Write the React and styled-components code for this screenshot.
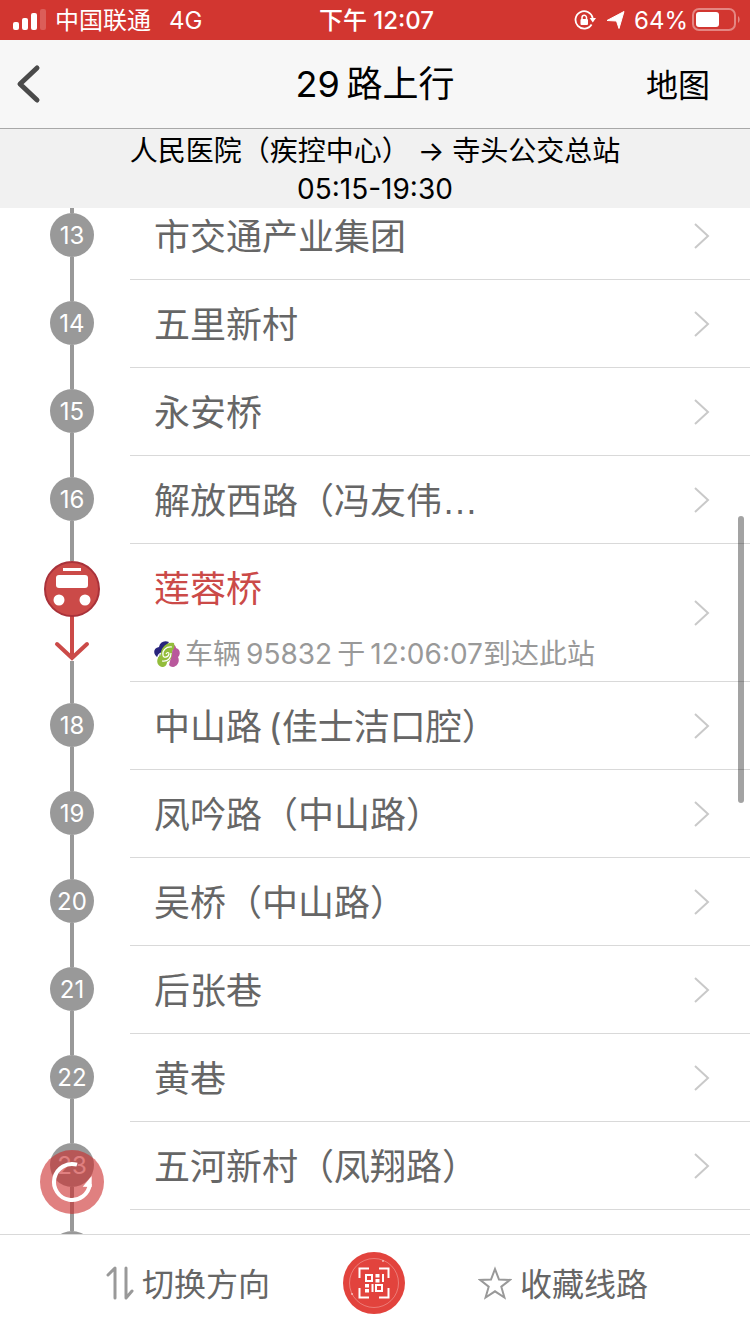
import React, { useLayoutEffect, useRef } from 'react';
import styled, { createGlobalStyle } from 'styled-components';

const stops = [
    { no: 13, name: '市交通产业集团' },
    { no: 14, name: '五里新村' },
    { no: 15, name: '永安桥' },
    { no: 16, name: '解放西路（冯友伟', truncated: true },
    { no: 17, name: '莲蓉桥', arrival: '车辆\u200995832\u2009于\u200912:06:07到达此站' },
    { no: 18, name: '中山路\u2009(佳士洁口腔）' },
    { no: 19, name: '凤吟路（中山路）' },
    { no: 20, name: '吴桥（中山路）' },
    { no: 21, name: '后张巷' },
    { no: 22, name: '黄巷' },
    { no: 23, name: '五河新村（凤翔路）' },
    { no: 24, name: '' },
];

function StatusBar() {
    return (
        <Status>
            <StatusSide>
                <svg width="34" height="24" viewBox="0 0 34 24" fill="#fff">
                    <rect x="0" y="14" width="6" height="8" rx="2" />
                    <rect x="9" y="10" width="6" height="12" rx="2" />
                    <rect x="18" y="5" width="6" height="17" rx="2" />
                    <rect x="27" y="1" width="6" height="21" rx="2" opacity="0.2" />
                </svg>
                <Carrier>中国联通</Carrier>
                <span>4G</span>
            </StatusSide>
            <Clock>下午 12:07</Clock>
            <StatusSide $end>
                <svg width="22" height="22" viewBox="0 0 22 22" fill="none" stroke="#fff" strokeWidth="1.8">
                    <path d="M17.600 15.500A8.700 8.700 0 1 1 18.700 9" />
                    <path d="M15.600 9h6.400l-3.200 4.500z" fill="#fff" stroke="none" />
                    <rect x="6.500" y="10" width="7.500" height="6" rx="1" fill="#fff" stroke="none" />
                    <path d="M8 10.500V8.500a2.200 2.200 0 0 1 4.500 0v2" strokeWidth="1.500" />
                </svg>
                <Arrow width="20" height="20" viewBox="0 0 20 20" fill="#fff" stroke="#fff" strokeLinejoin="round">
                    <path d="M1 10.500L18 1.500l-5 17-2.500-7.500z" />
                </Arrow>
                <span>64%</span>
                <Battery width="48" height="24" viewBox="0 0 48 24">
                    <rect x="1" y="1" width="42" height="21" rx="6" fill="none" stroke="#fff" strokeOpacity="0.4" strokeWidth="2" />
                    <rect x="4" y="4" width="23" height="15" rx="3" fill="#fff" />
                    <path d="M46 8c2.200 1.500 2.200 5.500 0 7z" fill="#fff" fillOpacity="0.4" />
                </Battery>
            </StatusSide>
        </Status>
    );
}

function BusMarker() {
    return (
        <svg width="56" height="100" viewBox="0 0 56 100" fill="none">
            <path d="M28 54v43M13 83l15 14 15-14" stroke="#cb4a48" strokeWidth="4" strokeLinecap="round" />
            <circle cx="28" cy="28" r="27" fill="#cb4a48" stroke="#a9323a" strokeWidth="2" />
            <rect x="19" y="7" width="18" height="3" fill="#fff" />
            <rect x="12" y="14" width="32" height="13" rx="3" fill="#fff" />
            <circle cx="15" cy="39" r="5.500" fill="#fff" />
            <circle cx="41" cy="39" r="5.500" fill="#fff" />
        </svg>
    );
}

function OperatorLogo() {
    return (
        <svg width="26" height="26" viewBox="0 0 26 26" fill="none">
            <path d="M3 16C-1 13-1 7 5 6c1-5 5-7 10-5L6 14z" fill="#28257c" />
            <path d="M19 3c2 1 3 3 3 4 4 1 5 6 2 9 2 4 0 9-5 10-2 0-3-1-4-2l3-12z" fill="#b9589c" />
            <path d="M20 2c1 4 0 6-2 8 1 6-2 10-5 11 0 3-2 5-5 5-4-1-6-5-4-9 0-2 1-2 3-3C6 8 12 0 20 2z" fill="#93bd3c" />
            <path d="M18 6c-6-1-10 4-9 8 0 3 5 3 6-1 0-2-2-2-3 0M8 20c6 1 9-3 9-8M4 16c0-2 1-3 3-4" stroke="#fff" strokeWidth="1.200" />
        </svg>
    );
}

function Stop({ stop }) {
    const current = Boolean(stop.arrival);
    return (
        <StopItem>
            <Track>
                <Line $short={current} />
                {current ? <BusMarker /> : <Badge>{stop.name && stop.no}</Badge>}
                <Line />
            </Track>
            <StopLink href="#stop">
                <StopText>
                    <StopName $current={current}>
                        {stop.name}
                        {stop.truncated && <Dots>…</Dots>}
                    </StopName>
                    {current && (
                        <Arrival>
                            <OperatorLogo />
                            <ArrivalText>{stop.arrival}</ArrivalText>
                        </Arrival>
                    )}
                </StopText>
                <svg width="16" height="26" viewBox="0 0 16 26" fill="none" stroke="#c9c9c9" strokeWidth="2">
                    <path d="M1 1l13 12L1 25" />
                </svg>
            </StopLink>
        </StopItem>
    );
}

function App() {
    const scroller = useRef(null);

    useLayoutEffect(() => {
        scroller.current.scrollTop = 16;
    }, []);

    return (
        <Page>
            <GlobalStyle />
            <StatusBar />
            <NavBar>
                <BackButton aria-label="返回">
                    <svg width="26" height="40" viewBox="0 0 26 40" fill="none" stroke="#4a4a4a" strokeWidth="5" strokeLinecap="round" strokeLinejoin="round">
                        <path d="M21 4L4 20l17 16" />
                    </svg>
                </BackButton>
                <Title>29{'\u2009'}路上行</Title>
                <MapButton>地图</MapButton>
            </NavBar>
            <RouteInfo>
                <span>人民医院（疾控中心） → 寺头公交总站</span>
                <span>05:15-19:30</span>
            </RouteInfo>
            <Main>
                <Scroller ref={scroller}>
                    <StopList>
                        {stops.map(stop => (
                            <Stop key={stop.no} stop={stop} />
                        ))}
                    </StopList>
                </Scroller>
                <ScrollThumb />
                <RefreshButton aria-label="刷新">
                    <svg width="44" height="44" viewBox="0 0 44 44" fill="none">
                        <path d="M27 4.700A18 18 0 1 0 39.900 24" stroke="#fff" strokeWidth="4" />
                        <path d="M41.700 16v11l-9-.3z" fill="#fff" />
                    </svg>
                </RefreshButton>
            </Main>
            <TabBar>
                <TabButton>
                    <svg width="28" height="34" viewBox="0 0 28 34" fill="none" stroke="#999" strokeWidth="3" strokeLinecap="round" strokeLinejoin="round">
                        <path d="M2 9l7-7v30M20 2v30l6-7" />
                    </svg>
                    <TabLabel>切换方向</TabLabel>
                </TabButton>
                <ScanButton aria-label="扫码">
                    <svg width="62" height="62" viewBox="0 0 62 62" fill="none" stroke="#fff">
                        <circle cx="31" cy="31" r="24.500" strokeOpacity="0.3" />
                        <circle cx="40" cy="9" r="1" fill="#fff" stroke="none" opacity="0.6" />
                        <circle cx="9" cy="42" r="1" fill="#fff" stroke="none" opacity="0.6" />
                        <path d="M16.500 26V16.500H26M36 16.500h9.500V26M45.500 36v9.500H36M26 45.500h-9.500V36" strokeWidth="2" />
                        <path d="M23 23h6v6h-6zM33 33h6v6h-6zM40 22v8M29.500 32v8" strokeWidth="2" />
                        <path d="M32.500 22h4v3.500h-4zM32.500 27h4v3.500h-4zM22 32h4v3.500h-4zM22 37h4v3.500h-4z" fill="#fff" stroke="none" />
                    </svg>
                </ScanButton>
                <TabButton>
                    <svg width="34" height="34" viewBox="0 0 34 34" fill="none" stroke="#999" strokeWidth="2">
                        <path d="M17 3l4 10.500 11 .4-8.700 6.800 3.100 10.800-9.400-6.200-9.400 6.200 3.100-10.800L2 13.900l11-.4z" />
                    </svg>
                    <TabLabel>收藏线路</TabLabel>
                </TabButton>
            </TabBar>
        </Page>
    );
}

export default App

const GlobalStyle = createGlobalStyle`
    * {
        box-sizing: border-box;
    }
    body {
        margin: 0;
        background: #fff;
        font-family: Inter, "Noto Sans CJK SC", sans-serif;
        font-weight: 400;
    }
    button {
        padding: 0;
        border: none;
        background: none;
        font: inherit;
        cursor: pointer;
    }
    svg {
        display: block;
        flex: none;
    }
`;

const Page = styled.div`
    display: flex;
    flex-direction: column;
    height: 100vh;
`;

const Status = styled.header`
    display: grid;
    grid-template-columns: 1fr auto 1fr;
    align-items: center;
    height: 40px;
    padding: 0 10px 0 13px;
    background: #d23630;
    color: #fff;
    font-size: 24px;
    line-height: 38px;
`;

const StatusSide = styled.div`
    display: flex;
    align-items: center;
    justify-content: ${props => (props.$end ? 'flex-end' : 'flex-start')};

    span {
        padding-top: 2px;
    }
`;

const Carrier = styled.span`
    margin: 0 18px 0 8px;
`;

const Clock = styled.span`
    padding-top: 2px;
    font-weight: 500;
`;

const Arrow = styled.svg`
    margin: 0 8px 0 10px;
`;

const Battery = styled.svg`
    margin-left: 4px;
`;

const NavBar = styled.nav`
    display: grid;
    grid-template-columns: 1fr auto 1fr;
    align-items: center;
    height: 89px;
    padding: 0 16px;
    background: #f7f7f7;
    border-bottom: 1px solid #a8a8a8;
`;

const BackButton = styled.button`
    justify-self: start;
`;

const Title = styled.h1`
    margin: 0;
    font-size: 36px;
    font-weight: 400;
    line-height: 88px;
`;

const MapButton = styled.button`
    justify-self: end;
    margin-right: 24px;
    padding-top: 4px;
    color: #000;
    font-size: 32px;
    line-height: 84px;
`;

const RouteInfo = styled.div`
    display: flex;
    flex-direction: column;
    align-items: center;
    padding-top: 3px;
    background: #f1f1f1;
    font-size: 28px;
    line-height: 38px;
`;

const Main = styled.main`
    position: relative;
    flex: 1;
    min-height: 0;
`;

const Scroller = styled.div`
    height: 100%;
    overflow-y: auto;
    scrollbar-width: none;
`;

const StopList = styled.ol`
    margin: 0;
    padding: 0;
    list-style: none;
`;

const StopItem = styled.li`
    display: flex;
    min-height: 88px;
`;

const Track = styled.div`
    display: flex;
    flex-direction: column;
    align-items: center;
    width: 60px;
    margin: 0 28px 0 42px;
`;

const Line = styled.div`
    flex: none;
    width: 4px;
    height: ${props => (props.$short ? '17px' : '21px')};
    background: #999;

    &:last-child {
        flex: 1;
    }
`;

const Badge = styled.span`
    width: 44px;
    height: 44px;
    padding-top: 2px;
    border-radius: 50%;
    background: #999;
    color: #fff;
    font-size: 24px;
    line-height: 42px;
    text-align: center;
`;

const StopLink = styled.a`
    display: flex;
    flex: 1;
    align-items: center;
    min-width: 0;
    padding: 0 40px 0 24px;
    border-bottom: 1px solid #d9d9d9;
    text-decoration: none;
`;

const StopText = styled.div`
    flex: 1;
    min-width: 0;
`;

const StopName = styled.div`
    padding-top: 4px;
    color: ${props => (props.$current ? '#cb4a48' : '#666')};
    font-size: 36px;
    line-height: 83px;
    white-space: nowrap;
`;

const Dots = styled.span`
    font-family: "Liberation Sans", sans-serif;
    line-height: 1;
`;

const Arrival = styled.div`
    display: flex;
    align-items: center;
    gap: 5px;
    padding: 2px 0 6px;
`;

const ArrivalText = styled.span`
    color: #999;
    font-size: 28px;
    line-height: 42px;
    white-space: nowrap;
`;

const ScrollThumb = styled.div`
    position: absolute;
    top: 30%;
    right: 6px;
    width: 6px;
    height: 28%;
    border-radius: 3px;
    background: rgba(0, 0, 0, 0.36);
`;

const RefreshButton = styled.button`
    position: absolute;
    left: 40px;
    bottom: 20px;
    display: flex;
    align-items: center;
    justify-content: center;
    width: 64px;
    height: 64px;
    border-radius: 50%;
    background: rgba(203, 43, 43, 0.6);
`;

const TabBar = styled.footer`
    display: flex;
    align-items: center;
    justify-content: space-between;
    height: 100px;
    padding: 0 102px 4px 106px;
    border-top: 1px solid #d9d9d9;
`;

const TabButton = styled.button`
    display: flex;
    align-items: center;
    gap: 8px;
    color: #666;
    font-size: 32px;
    line-height: 60px;
`;

const TabLabel = styled.span`
    padding-top: 4px;
`;

const ScanButton = styled.button`
    border-radius: 50%;
    background: #e2433d;
`;
